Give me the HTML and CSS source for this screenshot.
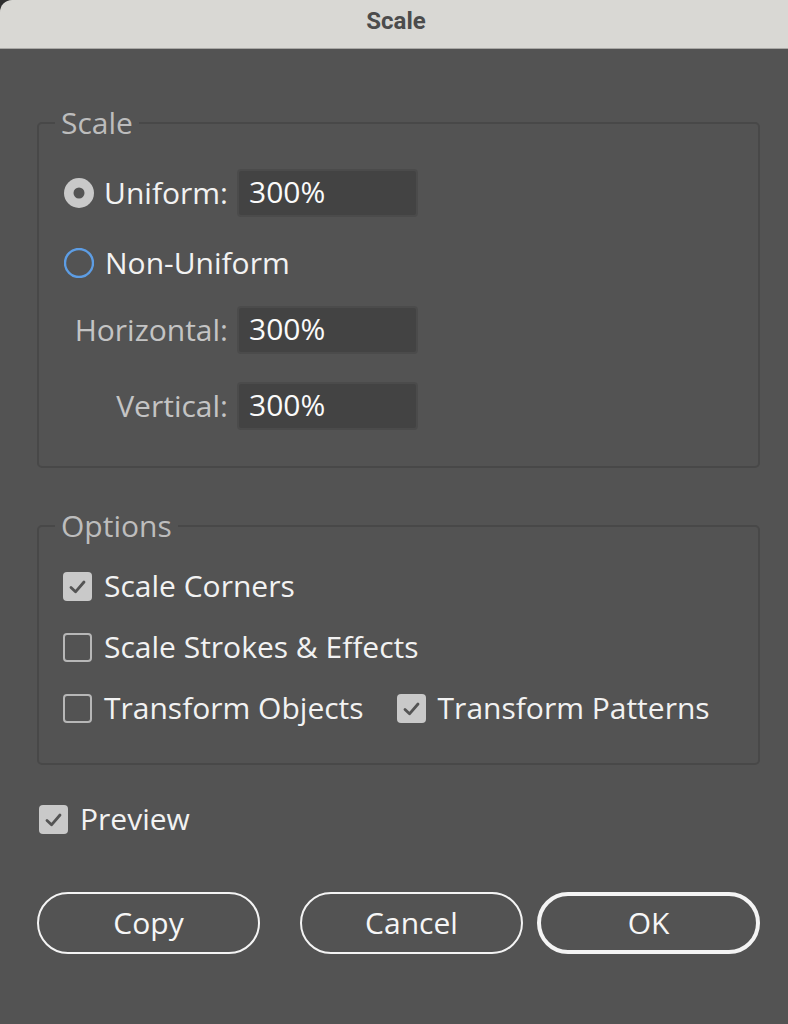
FILE: index.html
```html
<!DOCTYPE html>
<html>
<head>
<meta charset="utf-8">
<link rel="stylesheet" href="styles.css">
</head>
<body>
<div class="header"><div class="titlebar">Scale</div></div>
<div class="content">
  <fieldset class="group g-scale">
    <legend>Scale</legend>
    <div class="row r-uniform">
      <div class="lab">
        <svg class="radio" width="30" height="30" viewBox="0 0 30 30"><circle cx="15" cy="15" r="15" fill="#c9c9c9"/><circle cx="15" cy="15" r="5.5" fill="#545454"/></svg>
        <span class="txt">Uniform:</span>
      </div>
      <div class="field">300%</div>
    </div>
    <div class="row r-non">
      <svg class="radio" width="30" height="30" viewBox="0 0 30 30"><circle cx="15" cy="15" r="14" fill="none" stroke="#5d9de4" stroke-width="2.4"/></svg>
      <span class="txt">Non-Uniform</span>
    </div>
    <div class="row r-h">
      <div class="lab"><span class="txt dim">Horizontal:</span></div>
      <div class="field">300%</div>
    </div>
    <div class="row r-v">
      <div class="lab"><span class="txt dim">Vertical:</span></div>
      <div class="field">300%</div>
    </div>
  </fieldset>

  <fieldset class="group g-opt">
    <legend>Options</legend>
    <div class="row crow">
      <span class="cb on"><svg width="29" height="29" viewBox="0 0 29 29"><path d="M8 15.5 L12.5 19.8 L21 10" fill="none" stroke="#545454" stroke-width="2.8" stroke-linecap="round" stroke-linejoin="round"/></svg></span>
      <span class="txt">Scale Corners</span>
    </div>
    <div class="row crow">
      <span class="cb"></span>
      <span class="txt">Scale Strokes &amp; Effects</span>
    </div>
    <div class="row crow">
      <span class="cb"></span>
      <span class="txt">Transform Objects</span>
      <span class="cb on second"><svg width="29" height="29" viewBox="0 0 29 29"><path d="M8 15.5 L12.5 19.8 L21 10" fill="none" stroke="#545454" stroke-width="2.8" stroke-linecap="round" stroke-linejoin="round"/></svg></span>
      <span class="txt">Transform Patterns</span>
    </div>
  </fieldset>

  <div class="row preview">
    <span class="cb on"><svg width="29" height="29" viewBox="0 0 29 29"><path d="M8 15.5 L12.5 19.8 L21 10" fill="none" stroke="#545454" stroke-width="2.8" stroke-linecap="round" stroke-linejoin="round"/></svg></span>
    <span class="txt">Preview</span>
  </div>

  <div class="buttons">
    <div class="btn">Copy</div>
    <div class="btn b-cancel">Cancel</div>
    <div class="btn b-ok">OK</div>
  </div>
</div>
</body>
</html>
```
FILE: styles.css
```css
* { box-sizing: border-box; }
html, body { margin: 0; padding: 0; }
body {
  background: #535353;
  width: 788px;
  height: 1024px;
  overflow: hidden;
  font-family: "Open Sans", "DejaVu Sans", sans-serif;
  font-size: 30px;
  color: #f2f2f2;
}
.header { background: #2f2f2f; }
.titlebar {
  height: 49px;
  background: #d9d8d4;
  border-top-left-radius: 12px;
  border-bottom: 1px solid #a9a8a5;
  font-family: Roboto, "Liberation Sans", sans-serif;
  font-weight: 700;
  font-size: 24px;
  color: #4c4c4c;
  text-align: center;
  line-height: 43px;
  padding-left: 4px;
}
.content { padding: 0 28px 0 37px; }
.group {
  margin: 0;
  padding: 0;
  border: 2px solid #484848;
  border-radius: 5px;
  min-width: 0;
}
legend {
  margin-left: 16px;
  padding: 0 6px 0 6px;
  line-height: 36px;
  color: #bdbdbd;
}
.g-scale { margin-top: 56px; padding-bottom: 36px; }
.row { display: flex; align-items: center; height: 48px; }
.lab {
  width: 198px;
  height: 48px;
  display: flex;
  align-items: center;
  justify-content: flex-end;
  padding-right: 9px;
}
.lab .radio { margin-right: auto; }
.radio { margin-left: 25px; flex: none; }
.txt { white-space: nowrap; line-height: 40px; }
.dim { color: #c4c4c4; }
.r-uniform { margin-top: 28px; }
.r-non { margin-top: 22px; gap: 11px; }
.r-h { margin-top: 19px; }
.r-v { margin-top: 28px; }
.field {
  width: 181px;
  height: 48px;
  background: #434343;
  border: 2px solid #4b4b4b;
  border-radius: 4px;
  padding-left: 10px;
  line-height: 42px;
  color: #fafafa;
}
.g-opt { margin-top: 40px; padding-top: 18px; padding-bottom: 31px; }
.crow { margin-bottom: 13px; }
.crow:last-child { margin-bottom: 0; }
.cb {
  width: 29px;
  height: 29px;
  flex: none;
  border: 2px solid #b7b7b7;
  border-radius: 4px;
  margin-left: 24px;
  margin-right: 12px;
  display: block;
}
.cb.on {
  border: none;
  background: #c9c9c9;
}
.cb svg { display: block; }
.cb.second { margin-left: 33px; }
.preview { margin-top: 30px; }
.preview .cb { margin-left: 2px; }
.buttons { display: flex; margin-top: 49px; }
.btn {
  width: 223px;
  height: 62px;
  border: 2px solid #f4f4f4;
  border-radius: 31px;
  display: flex;
  align-items: center;
  justify-content: center;
  color: #f6f6f6;
  line-height: 40px;
}
.b-cancel { margin-left: 40px; }
.b-ok { margin-left: 14px; border-width: 4px; }
```
